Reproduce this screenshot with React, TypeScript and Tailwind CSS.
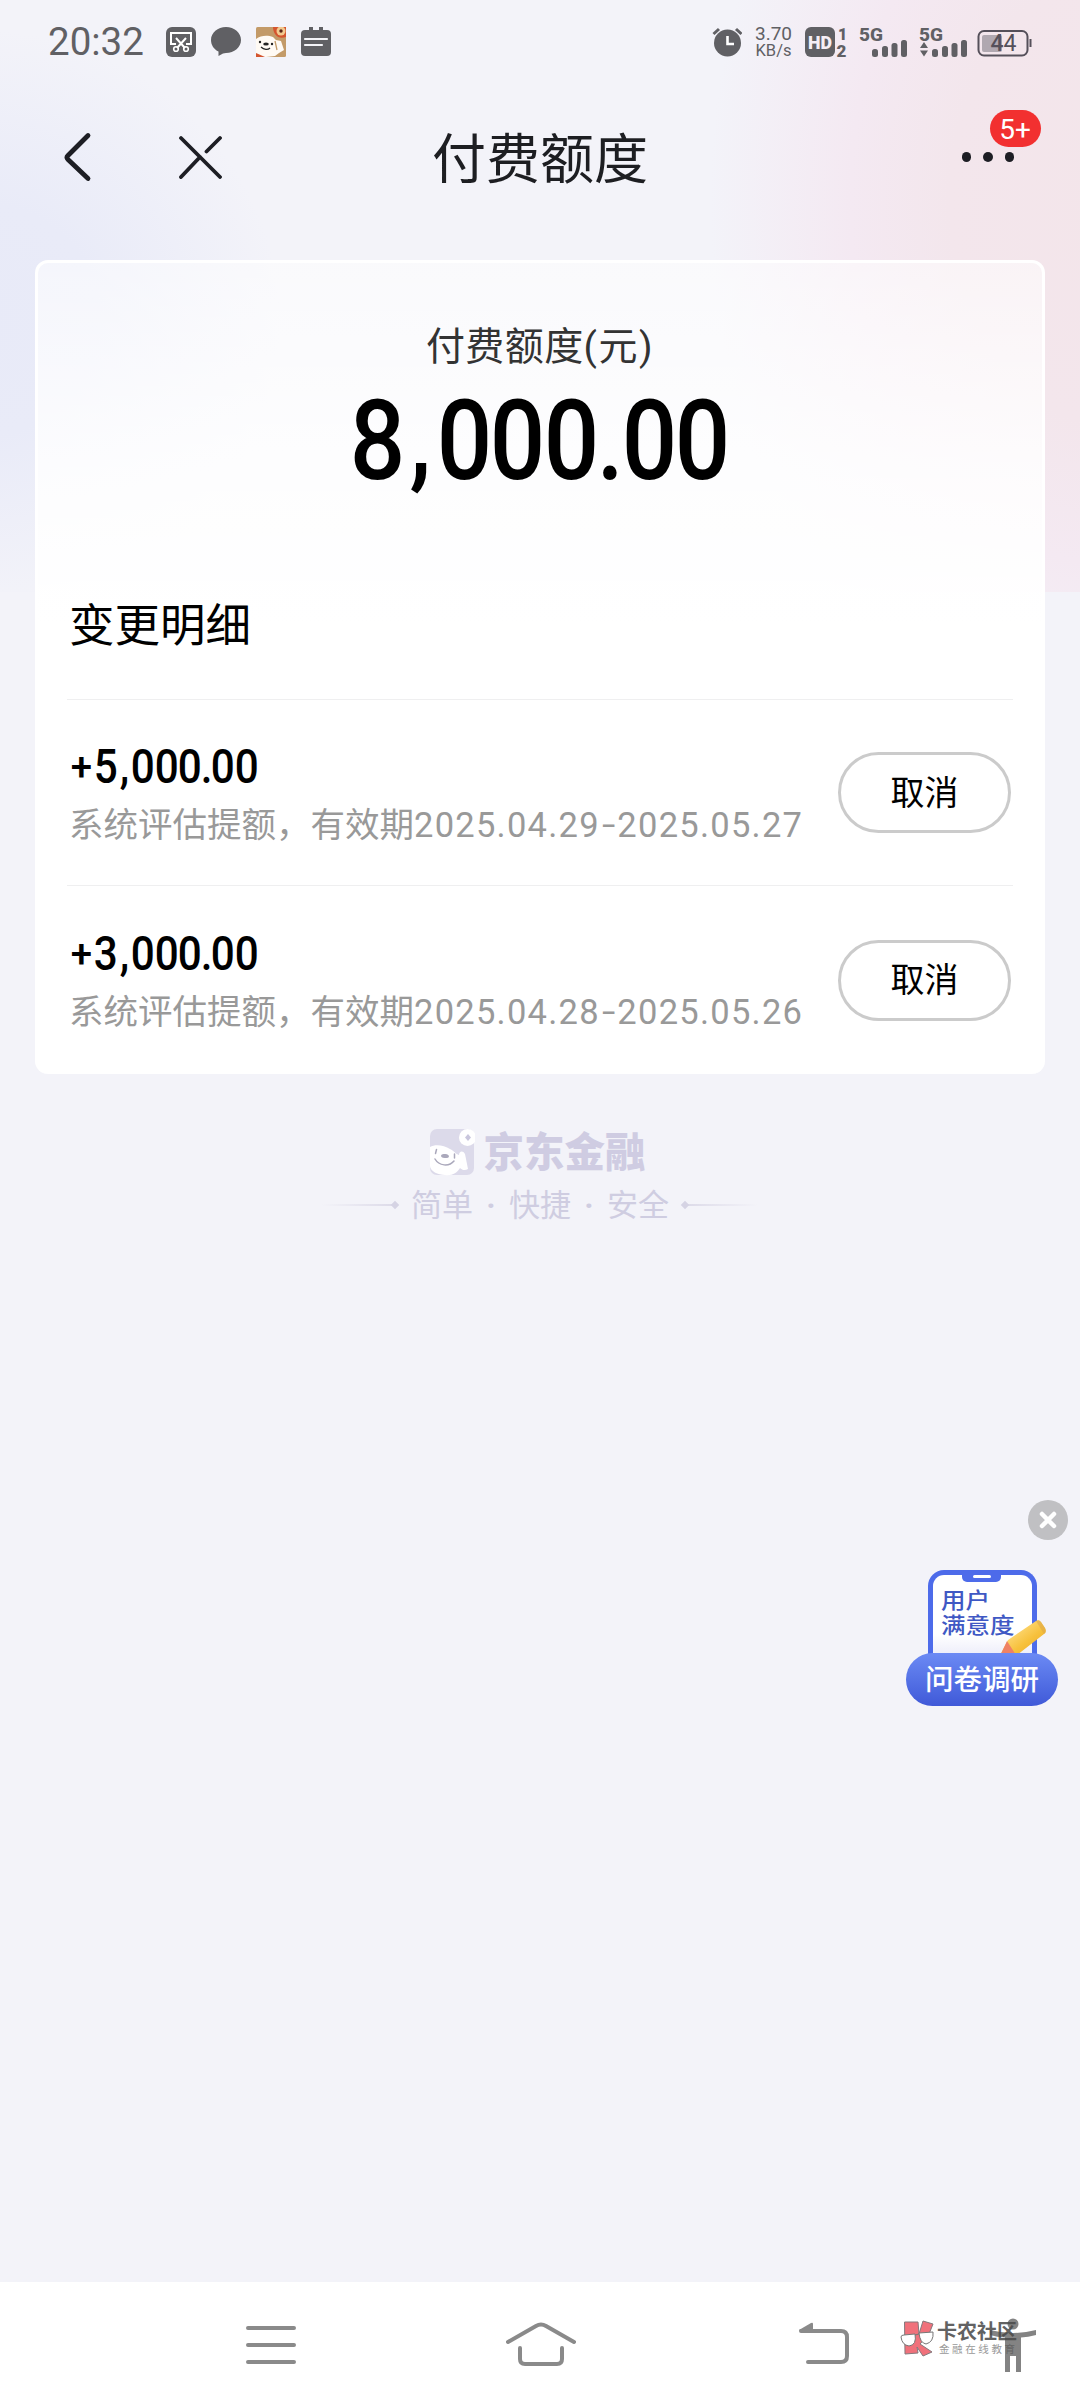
import clsx from "clsx";

type Change = {
  amount: string;
  from: string;
  to: string;
};

const changes: Change[] = [
  { amount: "+5,000.00", from: "2025.04.29", to: "2025.05.27" },
  { amount: "+3,000.00", from: "2025.04.28", to: "2025.05.26" },
];

export default function App() {
  return (
    <div className="relative flex h-[2408px] w-[1080px] flex-col overflow-hidden bg-[#f3f3f9] font-['Roboto','Noto_Sans_CJK_SC',sans-serif] text-[#1d1e22]">
      <div className="absolute inset-x-0 top-0 h-[592px] bg-[radial-gradient(ellipse_300px_290px_at_-20px_320px,#e8eaf8_0%,#e9ebf8_40%,transparent_100%),radial-gradient(ellipse_400px_560px_at_1110px_200px,#f3e5ea_0%,#f3e6ec_40%,#f4e9f2_65%,transparent_100%)]" />

      <div className="relative flex flex-1 flex-col">
        <StatusBar />
        <Header />
        <QuotaCard />
        <Brand />
      </div>

      <SurveyWidget />
      <SystemNav />
    </div>
  );
}

function StatusBar() {
  return (
    <div className="flex h-[84px] items-center pr-[48px] pl-[48px] text-[#606064]">
      <div className="w-[118px] text-[38.5px] leading-none">20:32</div>

      <svg width="166" height="30" viewBox="0 0 166 30" fill="none">
        <rect width="30" height="30" rx="6" fill="#606064" />
        <path
          d="M10 17H5V6h20v11h-5M10 11l9 10M20 11l-9 10"
          stroke="#fff"
          strokeWidth="2"
        />
        <circle cx="10" cy="22" r="2.3" stroke="#fff" strokeWidth="1.6" />
        <circle cx="20" cy="22" r="2.3" stroke="#fff" strokeWidth="1.6" />

        <path
          d="M60 0c8.300 0 15 5.800 15 13s-6.700 13-15 13c-1 0-2 .2-3 .6L52.500 29v-4.500C48 22.500 45 18 45 13 45 5.800 51.700 0 60 0Z"
          fill="#606064"
        />

        <rect x="90" width="30" height="30" rx="1.500" fill="#c39a68" />
        <path d="M90 12c5-4 12-4 17-2l3 3 5 1 3 9-5 3-4 3-9 1H90Z" fill="#fffaf4" />
        <path d="M107 0h13v10c-8 3-13-3-13-10Z" fill="#d4552f" />
        <circle cx="115" cy="4" r="4.500" fill="#f2c98e" />
        <circle cx="115" cy="4" r="1.700" fill="#5b2417" />
        <path d="M109 14l2 9" stroke="#c39a68" strokeWidth="1.300" />
        <ellipse cx="100" cy="17" rx="2.800" ry="1.600" fill="#222" />
        <circle cx="94" cy="15" r="1.200" fill="#222" />
        <circle cx="106" cy="17" r="1.200" fill="#222" />
        <path d="M95 20c3 3 7 3 9 1" stroke="#222" strokeWidth="1.200" />
        <path d="M90 26l9 4h-9Z" fill="#d4552f" />

        <rect x="135" y="3" width="30" height="26" rx="4" fill="#606064" />
        <path d="M145 0v6M155 0v6" stroke="#606064" strokeWidth="4" />
        <path d="M139 12h22M139 18h17" stroke="#f4f4f8" strokeWidth="2.200" strokeLinecap="round" />
      </svg>

      <svg className="ml-auto" width="30" height="30" viewBox="0 0 30 30" fill="none">
        <circle cx="15.500" cy="16" r="13.500" fill="#606064" />
        <path d="M1.500 7l5.500-5M29.500 7L24 2" stroke="#606064" strokeWidth="3" />
        <path d="M15.500 9v8h6.500" stroke="#fff" strokeWidth="2.600" />
      </svg>
      <div className="ml-[13px] w-[37px] text-center leading-none whitespace-nowrap">
        <div className="text-[19px] leading-[16px]">3.70</div>
        <div className="text-[16.500px] leading-[17px]">KB/s</div>
      </div>
      <svg className="ml-[13px] overflow-visible" width="43" height="30" viewBox="0 0 43 30">
        <rect width="30" height="30" rx="6" fill="#606064" />
        <text
          x="3"
          y="22"
          textLength="24"
          lengthAdjust="spacingAndGlyphs"
          fontSize="19"
          fontWeight="900"
          fill="#f5eef5"
        >
          HD
        </text>
        <text x="33" y="12.500" fontSize="16" fontWeight="900" fill="#606064">
          1
        </text>
        <text x="31.500" y="29.500" fontSize="17" fontWeight="900" fill="#606064">
          2
        </text>
      </svg>
      <Signal className="ml-[11px]" />
      <Signal className="ml-[11px]" arrows />
      <svg className="ml-[9px]" width="55" height="30" viewBox="0 0 55 30" fill="none">
        <rect x="1.500" y="4" width="49" height="24.500" rx="5.500" stroke="#55505a" strokeWidth="2" />
        <rect x="5" y="8" width="20" height="17" rx="2" fill="#b0a8b0" />
        <path d="M53.500 12v8" stroke="#55505a" strokeWidth="2" />
        <text x="26.500" y="24" textAnchor="middle" fontSize="23" fill="#55505a">
          <tspan fontWeight="500">4</tspan>4
        </text>
      </svg>
    </div>
  );
}

function Signal({ className, arrows }: { className?: string; arrows?: boolean }) {
  return (
    <svg className={clsx("overflow-visible", className)} width="49" height="30" viewBox="0 0 49 30">
      <text
        x="0"
        y="14"
        fontSize="18.500"
        fontWeight="800"
        textLength="24"
        lengthAdjust="spacingAndGlyphs"
        fill="#606064"
      >
        5G
      </text>
      <g fill="#606064">
        <rect x="13" y="22" width="6" height="8" rx="2.500" />
        <rect x="23" y="19" width="6" height="11" rx="2.500" />
        <rect x="32.500" y="16" width="6" height="14" rx="2.500" />
        <rect x="42" y="13" width="6" height="17" rx="2.500" />
        {arrows && <path d="M1 21l4-6 4 6ZM1 23.500h8l-4 6Z" />}
      </g>
    </svg>
  );
}

function Header() {
  return (
    <div className="grid h-[146px] grid-cols-[1fr_auto_1fr] items-center">
      <div className="flex items-center gap-[86px] pl-[62px]">
        <svg width="30" height="50" viewBox="0 0 30 50" fill="none">
          <path d="M26 3.500L6 23.500q-2 2 0 4l20 19" stroke="#1d1e24" strokeWidth="4.800" strokeLinecap="round" />
        </svg>
        <svg width="44" height="44" viewBox="0 0 44 44" fill="none">
          <path
            d="M3 3l39 39M3 42l19-20M28.500 16.500L42 3"
            stroke="#1d1e24"
            strokeWidth="3.800"
            strokeLinecap="round"
          />
        </svg>
      </div>
      <h1 className="pt-[7px] text-[54px] leading-[60px]">付费额度</h1>
      <div className="relative mr-[66px] flex gap-[12px] justify-self-end">
        <span className="size-[9.500px] rounded-full bg-[#1d1e24]" />
        <span className="size-[9.500px] rounded-full bg-[#1d1e24]" />
        <span className="size-[9.500px] rounded-full bg-[#1d1e24]" />
        <span className="absolute -top-[42px] left-[28px] flex h-[37px] w-[51px] items-center justify-center rounded-full bg-[#f23030] pt-[2px] text-[28px] leading-none text-white">
          5+
        </span>
      </div>
    </div>
  );
}

function QuotaCard() {
  return (
    <section className="mx-[35px] mt-[30px] h-[814px] rounded-[13px] border-[3px] border-b-0 border-white bg-linear-to-b from-white/55 via-white/85 via-[25%] to-white to-[45%] bg-origin-border">
      <div className="mt-[59px] text-center text-[39px] leading-[50px] tracking-[0.400px] text-[#333]">
        付费额度
        <span className="tracking-[1.500px]">(元)</span>
      </div>
      <div className="mt-[14px] flex justify-center">
        <Amount value="8,000.00" large />
      </div>

      <h2 className="mt-[101px] px-[31px] text-[45.500px] leading-[60px] text-black">变更明细</h2>

      <ul className="mx-[29px] mt-[42px]">
        {changes.map((c, i) => (
          <li
            key={c.amount}
            className={clsx(
              "flex items-center justify-between border-t border-[#efeff0]",
              i === 0 ? "h-[186px]" : "h-[189px]",
            )}
          >
            <div className="pt-[6px] pl-[2px]">
              <Amount value={c.amount} />
              <div className="mt-[8px] text-[34.500px] leading-[50px] whitespace-nowrap text-[#999]">
                系统评估提额，有效期
                <span className="tracking-[1.250px]">{c.from}</span>
                <span className="mx-[4px] inline-block -translate-y-[1px] scale-x-[1.400]">-</span>
                <span className="tracking-[1.250px]">{c.to}</span>
              </div>
            </div>
            <button
              type="button"
              className="mr-[2px] h-[81px] w-[173px] rounded-full border-[3px] border-[#cbcbcb] text-[34px] leading-none text-black"
            >
              取消
            </button>
          </li>
        ))}
      </ul>
    </section>
  );
}

// números condensados: cada caractere ocupa uma célula própria
function Amount({ value, large }: { value: string; large?: boolean }) {
  return (
    <div
      className={clsx(
        "flex font-medium text-black",
        large ? "h-[110px] text-[111px] leading-[110px]" : "h-[50px] text-[48px] leading-[50px]",
      )}
    >
      {value.split("").map((ch, i) => (
        <span
          key={i}
          className={clsx(
            "flex justify-center",
            ch === "," && "w-[0.300em] -translate-y-[0.030em]",
            ch === "." && "w-[0.222em]",
            ch === "+" && "w-[0.520em]",
            !",.+".includes(ch) && "w-[0.482em]",
          )}
        >
          <span className={ch === "+" ? "scale-[0.800]" : "scale-x-[0.880]"}>{ch}</span>
        </span>
      ))}
    </div>
  );
}

function Brand() {
  return (
    <div className="mt-[50px] flex flex-col items-center">
      <div className="flex h-[56px] items-center gap-[9px] pr-[5px]">
        <svg width="45" height="47" viewBox="0 0 45 47" fill="none">
          <rect width="44" height="46" rx="7" fill="#dcdaea" />
          <path
            d="M0 18c5-3 14-2 20 2 4 2 7 6 9 6 0-4 4-5 6-1l3 15c-3 2-6 1-8-1-3 5-8 8-15 7C8 46 0 42 0 37Z"
            fill="#fff"
          />
          <circle cx="37.500" cy="8.500" r="8.500" fill="#fff" />
          <path d="M38 5l3 3.500-3 3.500-3-3.500Z" fill="#c9c6dd" />
          <ellipse cx="15" cy="27" rx="4" ry="2" fill="#aaa8bb" transform="rotate(8 15 27)" />
          <path d="M6.500 20.500l-1 4M24.500 25v4M5 30c4 7 14 8 19 2" stroke="#aaa8bb" strokeWidth="1.500" strokeLinecap="round" />
        </svg>
        <span className="pt-[3px] text-[40.500px] leading-none font-black text-[#cfcce2]">京东金融</span>
      </div>
      <div className="flex h-[50px] items-center text-[31px] leading-none whitespace-pre text-[#cfcde1]">
        <span className="h-[2px] w-[70px] bg-linear-to-r from-transparent to-[#dddbe9]" />
        <span className="mr-[13px] size-[6px] rotate-45 bg-[#d5d3e4]" />
        <span>简单</span>
        <span className="w-[36px] text-center font-bold">·</span>
        <span>快捷</span>
        <span className="w-[36px] text-center font-bold">·</span>
        <span>安全</span>
        <span className="ml-[13px] size-[6px] rotate-45 bg-[#d5d3e4]" />
        <span className="h-[2px] w-[70px] bg-linear-to-l from-transparent to-[#dddbe9]" />
      </div>
    </div>
  );
}

function SurveyWidget() {
  return (
    <div className="absolute top-[1500px] left-[906px] w-[162px]">
      <button type="button" aria-label="关闭" className="ml-auto flex size-[40px] items-center justify-center rounded-full bg-[#c0c0c3]">
        <svg width="18" height="18" viewBox="0 0 18 18">
          <path d="M3 3l12 12M15 3L3 15" stroke="#fff" strokeWidth="4.500" strokeLinecap="round" />
        </svg>
      </button>
      <div className="relative mt-[30px] ml-[22px] h-[84px] w-[109px] rounded-t-[16px] border-[5.500px] border-b-0 border-[#4d6bea] bg-linear-to-b from-white from-75% to-[#eeeefa] text-[#3f58c4]">
        <div className="absolute top-0 left-[29px] flex h-[7px] w-[39px] justify-center rounded-b-[5px] bg-[#4d6bea]">
          <span className="h-[2.500px] w-[18px] rounded-full bg-white" />
        </div>
        <div className="pt-[13px] pl-[8px] text-[24.500px] leading-[25px] font-medium whitespace-nowrap">
          <div className="origin-left scale-y-[0.860]">用户</div>
          <div className="origin-left scale-y-[0.860]">满意度</div>
        </div>
        <svg className="absolute top-[43px] left-[65px]" width="50" height="38" viewBox="0 0 50 38">
          <defs>
            <linearGradient id="pencil" x1="0" y1="0" x2="1" y2="1">
              <stop offset="0.200" stopColor="#ffe08a" />
              <stop offset="0.600" stopColor="#f7c13c" />
              <stop offset="1" stopColor="#e9a526" />
            </linearGradient>
          </defs>
          <path d="M10 22L38 3q3-2 5 1l4 6q2 4-1 6L19 37H2Z" fill="url(#pencil)" />
          <path d="M9 23l9 14-16 1Z" fill="#ef8265" />
          <path d="M38 3q3-2 5 1l4 6q2 4-1 6Z" fill="#dea94a" opacity="0.600" />
        </svg>
      </div>
      <div className="relative -mt-[1px] flex h-[53px] w-[152px] items-center justify-center rounded-full bg-linear-to-b from-[#6c8af4] to-[#4059d8] pt-[4px] text-[28.500px] leading-none font-medium text-white">
        问卷调研
      </div>
    </div>
  );
}

function SystemNav() {
  return (
    <nav className="relative flex h-[126px] items-start bg-white pl-[246px] text-[#8a8a8a]">
      <svg className="mt-[43px]" width="50" height="42" viewBox="0 0 50 42">
        <path d="M2 3h46M2 20h46M2 37h46" stroke="currentColor" strokeWidth="4" strokeLinecap="round" />
      </svg>
      <svg className="mt-[39px] ml-[210px]" width="70" height="46" viewBox="0 0 70 46" fill="none">
        <path
          d="M2 21L30 5q5-3 10 0l28 16M14 27v11q0 5 5 5h32q5 0 5-5V27"
          stroke="currentColor"
          strokeWidth="4"
          strokeLinecap="round"
        />
      </svg>
      <svg className="mt-[40px] ml-[222px]" width="52" height="44" viewBox="0 0 52 44" fill="none">
        <path d="M3 9h40q6 0 6 6v19q0 6-6 6H10" stroke="currentColor" strokeWidth="4" strokeLinecap="round" />
        <path d="M1 8L13 1q2-1 2 1v7H2Z" fill="currentColor" />
      </svg>
      <div className="absolute top-[38px] left-[900px] flex items-start gap-[2px]">
        <svg width="35" height="37" viewBox="0 0 35 37">
          <path
            d="M4.500 2H18l1 12L23 1l10 3-4 10-9 10 12 8-9 4-6-9 1 6-13 1Z"
            fill="#f0717b"
            stroke="#85797d"
          />
          <path
            d="M1 17q0-2 3-2l11-1q2 11-6 12-7-1-8-9ZM19 13l14-1q1 10-7 12-6-1-7-11ZM15 15l4-1"
            fill="#fff"
            stroke="#777"
          />
        </svg>
        <div className="whitespace-nowrap">
          <div className="text-[20px] leading-[24px] font-bold text-[#626262]">卡农社区</div>
          <div className="pl-[2px] text-[10.500px] leading-[12px] tracking-[2.600px] text-[#999]">金融在线教育</div>
        </div>
      </div>
      <svg className="absolute top-[36px] left-[989px]" width="48" height="55" viewBox="0 0 48 55">
        <g fill="#4a4a4a" opacity="0.680">
          <circle cx="24" cy="6" r="5.500" />
          <path d="M1 12q23 6 46 0v5q-8 2-15 2.500V54h-5V38h-6v16h-5V19.500Q8 19 1 17Z" />
        </g>
      </svg>
    </nav>
  );
}
